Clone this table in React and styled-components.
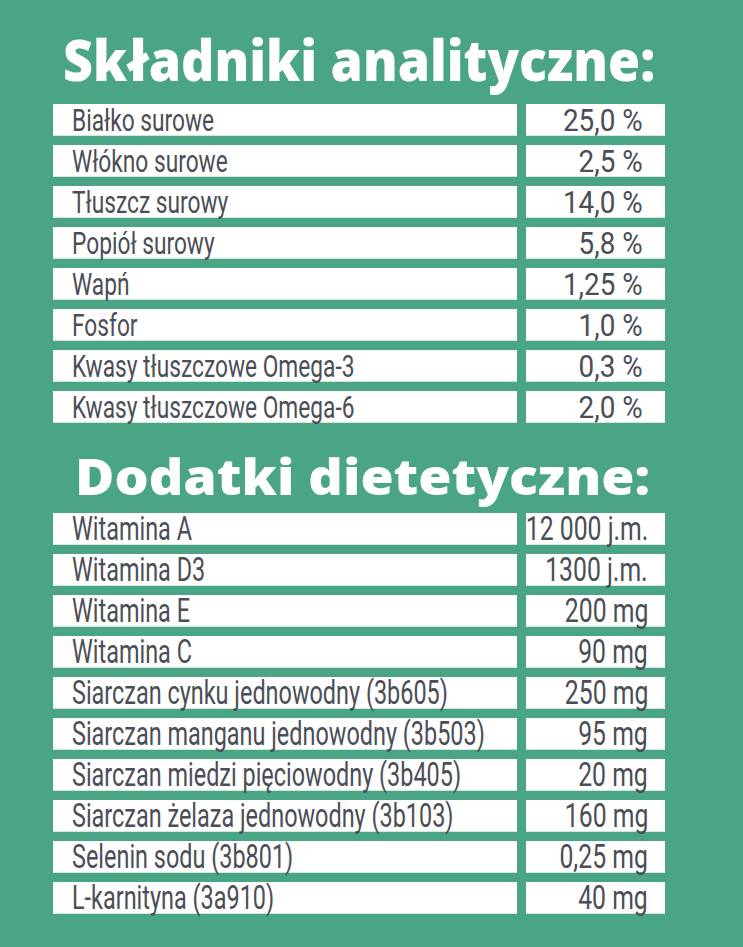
import React from "react";
import styled, { createGlobalStyle } from "styled-components";

const analytic = [
  ["Białko surowe", "25,0 %"],
  ["Włókno surowe", "2,5 %"],
  ["Tłuszcz surowy", "14,0 %"],
  ["Popiół surowy", "5,8 %"],
  ["Wapń", "1,25 %"],
  ["Fosfor", "1,0 %"],
  ["Kwasy tłuszczowe Omega-3", "0,3 %"],
  ["Kwasy tłuszczowe Omega-6", "2,0 %"],
];

const additives = [
  ["Witamina A", "12 000 j.m."],
  ["Witamina D3", "1300 j.m."],
  ["Witamina E", "200 mg"],
  ["Witamina C", "90 mg"],
  ["Siarczan cynku jednowodny (3b605)", "250 mg"],
  ["Siarczan manganu jednowodny (3b503)", "95 mg"],
  ["Siarczan miedzi pięciowodny (3b405)", "20 mg"],
  ["Siarczan żelaza jednowodny (3b103)", "160 mg"],
  ["Selenin sodu (3b801)", "0,25 mg"],
  ["L-karnityna (3a910)", "40 mg"],
];

function Section({ rows, size, labelScale, valueScale, valuePad, gap }) {
  return (
    <Table $gap={gap}>
      {rows.map(([name, value]) => (
        <React.Fragment key={name}>
          <LabelCell $size={size}>
            <Label $scale={labelScale}>{name}</Label>
          </LabelCell>
          <ValueCell $size={size} $pad={valuePad}>
            <Value $scale={valueScale}>{value}</Value>
          </ValueCell>
        </React.Fragment>
      ))}
    </Table>
  );
}

function App() {
  return (
    <>
      <GlobalStyle />
      <Page>
        <Heading $size={57} $scale={0.91} $top={31}>
          Składniki analityczne:
        </Heading>
        <Section
          rows={analytic}
          size={32}
          labelScale={0.71}
          valueScale={0.87}
          valuePad={22}
          gap={16}
        />

        <Heading $size={50} $scale={1.075} $top={28} $indent={22}>
          Dodatki dietetyczne:
        </Heading>
        <Section
          rows={additives}
          size={33}
          labelScale={0.71}
          valueScale={0.75}
          valuePad={17}
          gap={12}
        />
      </Page>
    </>
  );
}

const GlobalStyle = createGlobalStyle`
  html, body {
    margin: 0;
    padding: 0;
    background: #4aa585;
  }
`;

const Page = styled.main`
  width: 743px;
  height: 947px;
  box-sizing: border-box;
  padding-left: 53px;
  overflow: hidden;
  background: #4aa585;
`;

const Heading = styled.h2`
  margin: ${(p) => p.$top}px 0 0 ${(p) => p.$indent || 10}px;
  font-family: "Open Sans", "DejaVu Sans", sans-serif;
  font-weight: 800;
  font-size: ${(p) => p.$size}px;
  line-height: 1;
  color: #ffffff;
  white-space: nowrap;
  transform: scaleX(${(p) => p.$scale});
  transform-origin: left center;
`;

const Table = styled.div`
  display: grid;
  grid-template-columns: 464px 139px;
  column-gap: 9px;
  row-gap: 9px;
  margin-top: ${(p) => p.$gap}px;
`;

const Cell = styled.div`
  height: 32px;
  box-sizing: border-box;
  background: #ffffff;
  border-bottom: 1px solid #cfe9df;
  display: flex;
  align-items: flex-start;
  font-family: Roboto, "Liberation Sans", sans-serif;
  font-weight: 400;
  font-size: ${(p) => p.$size}px;
  line-height: 32px;
  color: #4b4e56;
  white-space: nowrap;
`;

const LabelCell = styled(Cell)`
  padding-left: 19px;
`;

const ValueCell = styled(Cell)`
  justify-content: flex-end;
  padding-right: ${(p) => p.$pad}px;
`;

const Label = styled.span`
  display: inline-block;
  transform: scaleX(${(p) => p.$scale});
  transform-origin: left center;
`;

const Value = styled.span`
  display: inline-block;
  transform: scaleX(${(p) => p.$scale});
  transform-origin: right center;
`;

export default App;
